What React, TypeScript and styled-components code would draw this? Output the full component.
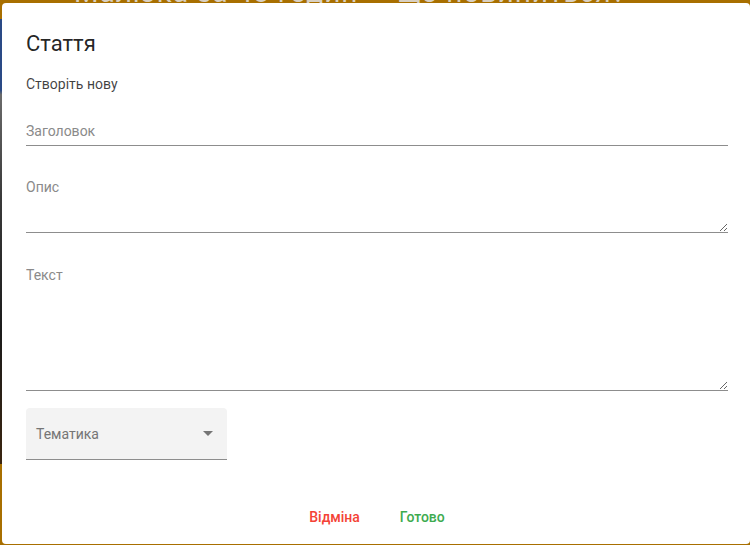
import React from "react";
import styled, { createGlobalStyle } from "styled-components";

const Global = createGlobalStyle`
  html, body { margin: 0; padding: 0; }
  body {
    width: 750px;
    height: 545px;
    overflow: hidden;
    font-family: Roboto, "Noto Sans", Arial, sans-serif;
    background: #a86f00;
  }
  * { box-sizing: border-box; }
`;

const Page = styled.div`
  position: relative;
  width: 750px;
  height: 545px;
  background: #a86f00;
  display: flex;
  flex-direction: column;
  overflow: hidden;
`;

const Headline = styled.h1`
  margin: 0;
  margin-top: -21px;
  padding-left: 74px;
  font-size: 28px;
  font-weight: 400;
  line-height: 28px;
  letter-spacing: 1px;
  color: #d8d0c2;
  white-space: nowrap;
`;

const Photo = styled.div`
  margin-top: 12px;
  width: 120px;
  height: 445px;
  background: linear-gradient(
    180deg,
    #2a4a86 0%,
    #2a4a86 16%,
    #6b6b6b 17%,
    #3a3a3a 40%,
    #1b1b1b 70%,
    #3a2510 100%
  );
`;

const Dialog = styled.div`
  position: absolute;
  left: 2px;
  top: 3px;
  right: 0;
  bottom: 1px;
  background: #ffffff;
  border-radius: 4px;
  display: flex;
  flex-direction: column;
  padding: 0 22px 0 24px;
`;

const Title = styled.h2`
  margin: 27px 0 0;
  font-size: 22px;
  font-weight: 400;
  line-height: 28px;
  color: rgba(0, 0, 0, 0.87);
`;

const Subtitle = styled.p`
  margin: 17px 0 0;
  font-size: 14px;
  line-height: 18px;
  color: rgba(0, 0, 0, 0.75);
`;

const TextInput = styled.input`
  display: block;
  width: 100%;
  margin-top: 26px;
  height: 27px;
  border: none;
  border-bottom: 1px solid #8d8d8d;
  padding: 0 0 2px;
  font-family: inherit;
  font-size: 14px;
  color: rgba(0, 0, 0, 0.87);
  outline: none;
  background: transparent;
  &::placeholder { color: #8a8a8a; }
`;

const Area = styled.textarea<{ $h: number; $mt: number }>`
  display: block;
  width: 100%;
  margin-top: ${(p) => p.$mt}px;
  height: ${(p) => p.$h}px;
  border: none;
  border-bottom: 1px solid #8d8d8d;
  padding: 0;
  font-family: inherit;
  font-size: 14px;
  line-height: 18px;
  color: rgba(0, 0, 0, 0.87);
  outline: none;
  resize: vertical;
  background: transparent;
  &::placeholder { color: #8a8a8a; }
`;

const Select = styled.div`
  margin-top: 17px;
  width: 201px;
  height: 52px;
  background: #f3f3f3;
  border-radius: 4px 4px 0 0;
  border-bottom: 1px solid #8d8d8d;
  display: flex;
  align-items: center;
  justify-content: space-between;
  padding: 1px 14px 0 10px;
  font-size: 14px;
  color: #757575;
`;

const Caret = styled.span`
  width: 0;
  height: 0;
  border-left: 5px solid transparent;
  border-right: 5px solid transparent;
  border-top: 5px solid #757575;
  margin-top: -2px;
`;

const Actions = styled.div`
  margin-top: auto;
  margin-bottom: 12px;
  display: flex;
  justify-content: center;
  gap: 24px;
`;

const Button = styled.button<{ $color: string }>`
  border: none;
  background: transparent;
  padding: 6px 8px;
  font-family: inherit;
  font-size: 14px;
  font-weight: 500;
  line-height: 18px;
  color: ${(p) => p.$color};
  cursor: pointer;
`;

export default function App() {
  return (
    <>
      <Global />
      <Page>
        <Headline>Малюка за 48 годин — що повиниться?</Headline>
        <Photo />
        <Dialog>
          <Title>Стаття</Title>
          <Subtitle>Створіть нову</Subtitle>
          <TextInput placeholder="Заголовок" />
          <Area $mt={32} $h={55} placeholder="Опис" />
          <Area $mt={33} $h={125} placeholder="Текст" />
          <Select>
            <span>Тематика</span>
            <Caret />
          </Select>
          <Actions>
            <Button $color="#f44336">Відміна</Button>
            <Button $color="#3dab4f">Готово</Button>
          </Actions>
        </Dialog>
      </Page>
    </>
  );
}
